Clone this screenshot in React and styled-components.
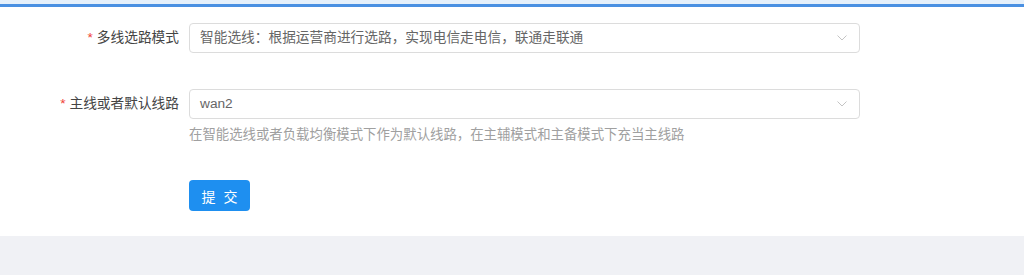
import React from 'react';
import styled, { createGlobalStyle } from 'styled-components';

const GlobalStyle = createGlobalStyle`
  html, body {
    margin: 0;
    padding: 0;
    background: #f0f1f5;
    font-family: "Liberation Sans", "Noto Sans CJK SC", sans-serif;
    font-size: 13.7px;
  }
`;

const Page = styled.div`
  width: 1024px;
  height: 275px;
  background: #f0f1f5;
`;

const Panel = styled.div`
  background: #fff;
  border-top: 4px solid #e5f0fb;
  height: 236px;
  box-sizing: border-box;
`;

const TopLine = styled.div`
  height: 3px;
  background: #4a90e2;
`;

const Form = styled.form`
  display: flex;
  flex-direction: column;
  padding-top: 16px;
`;

const Row = styled.div`
  display: flex;
  align-items: flex-start;
  margin-bottom: ${(p) => p.$gap || 0}px;
`;

const Label = styled.label`
  width: 189px;
  box-sizing: border-box;
  padding-right: 10px;
  text-align: right;
  line-height: 30px;
  color: #444;
  white-space: nowrap;
`;

const Star = styled.span`
  color: #f04134;
  margin-right: 4px;
  font-family: "Liberation Sans", sans-serif;
`;

const Field = styled.div`
  display: flex;
  flex-direction: column;
`;

const Select = styled.div`
  width: 671px;
  height: 30px;
  box-sizing: border-box;
  border: 1px solid #dcdcdc;
  border-radius: 4px;
  display: flex;
  align-items: center;
  justify-content: space-between;
  padding: 0 12px 0 10px;
  color: #666;
`;

const Value = styled.span`
  line-height: 28px;
`;

const Help = styled.div`
  color: #a0a0a0;
  line-height: 20px;
  margin-top: 6px;
  font-size: 13.4px;
`;

const Button = styled.button`
  width: 61px;
  height: 31px;
  border: none;
  border-radius: 4px;
  background: #1e8ff0;
  color: #fff;
  font-family: inherit;
  font-size: 14px;
  letter-spacing: 2px;
  padding: 0 0 0 2px;
  cursor: pointer;
`;

const Chevron = () => (
  <svg width="10" height="6" viewBox="0 0 10 6">
    <path d="M0.5 0.5 L5 5 L9.5 0.5" fill="none" stroke="#c4c4c4" strokeWidth="1" />
  </svg>
);

export default function App() {
  return (
    <Page>
      <GlobalStyle />
      <Panel>
        <TopLine />
        <Form>
          <Row $gap={36}>
            <Label><Star>*</Star>多线选路模式</Label>
            <Select>
              <Value>智能选线：根据运营商进行选路，实现电信走电信，联通走联通</Value>
              <Chevron />
            </Select>
          </Row>
          <Row $gap={35}>
            <Label><Star>*</Star>主线或者默认线路</Label>
            <Field>
              <Select>
                <Value>wan2</Value>
                <Chevron />
              </Select>
              <Help>在智能选线或者负载均衡模式下作为默认线路，在主辅模式和主备模式下充当主线路</Help>
            </Field>
          </Row>
          <Row>
            <Label />
            <Button type="button">提 交</Button>
          </Row>
        </Form>
      </Panel>
    </Page>
  );
}
